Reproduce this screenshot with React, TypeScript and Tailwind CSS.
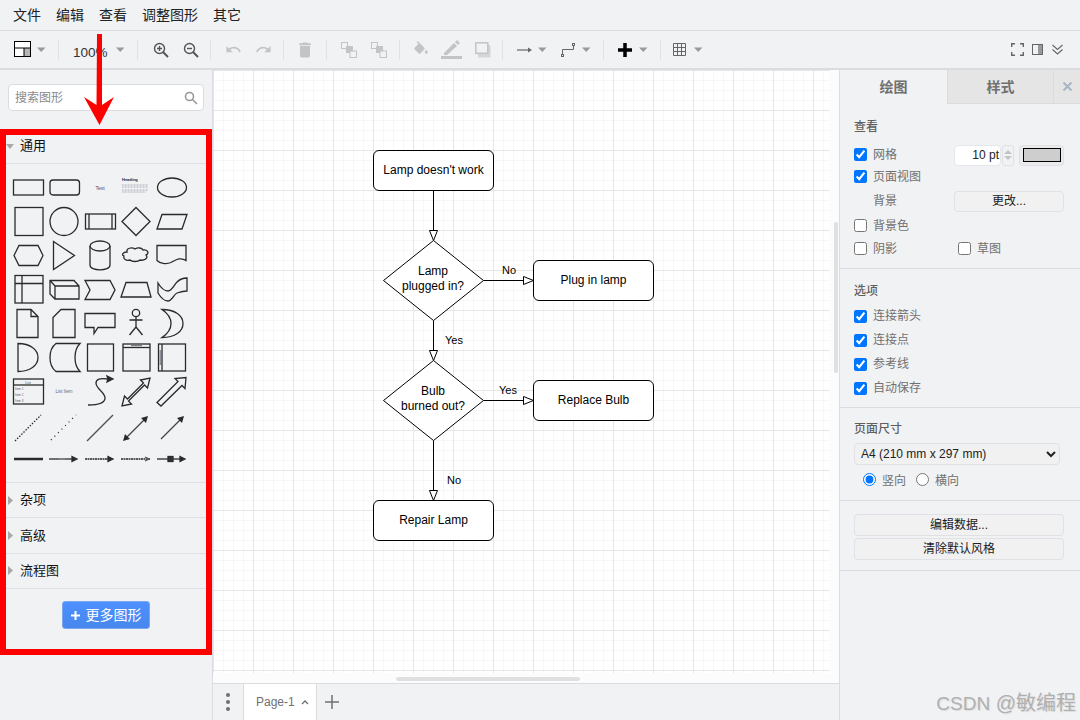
import React from "react";

const C = "#2a2a2a";
function Caret({ className = "" }: { className?: string }) {
  return (
    <svg width="9" height="6" viewBox="0 0 9 6" className={className}>
      <path d="M0 .5h8.5L4.25 5z" fill="#9a9a9a" />
    </svg>
  );
}
function Sep({ ml }: { ml: string }) {
  return <div className={`h-5 w-px bg-[#dfe1e5] ${ml}`} />;
}
function M({ d, w = 16, fill = "#c4c4c4", className = "" }: { d: string; w?: number; fill?: string; className?: string }) {
  return (
    <svg width={w} height={w} viewBox="0 0 24 24" className={className}>
      <path d={d} fill={fill} />
    </svg>
  );
}

function Shape({ children }: { children?: React.ReactNode }) {
  return (
    <svg width="36" height="34" viewBox="0 0 36 34" fill="none" stroke={C} strokeWidth="1.3">
      {children}
    </svg>
  );
}
const T = { fill: "#556", stroke: "none", fontFamily: "Liberation Sans" };

const shapes: React.ReactNode[] = [
  <rect x="3.5" y="10" width="30" height="15" />,
  <rect x="4" y="10" width="29.5" height="15" rx="3" />,
  <text x="18" y="19.5" fontSize="5" textAnchor="middle" {...T} fill="#447">Text</text>,
  <g>
    <text x="4" y="11" fontSize="4" fontWeight="bold" {...T} fill="#223">Heading</text>
    <path d="M4 15h26M4 17h26M4 20h26M4 22h24" stroke="#99a" strokeWidth=".8" strokeDasharray="1 .5" />
  </g>,
  <ellipse cx="18" cy="17.5" rx="14.5" ry="9.5" />,

  <rect x="5" y="3.5" width="28" height="28" />,
  <circle cx="18" cy="17.5" r="14" />,
  <g><rect x="3.5" y="10" width="30" height="15" /><path d="M7 10v15M30 10v15" /></g>,
  <path d="M18 3.5l14 14-14 14-14-14z" />,
  <path d="M8 10.5h25l-5 14.500H3z" />,

  <path d="M4 17.500l5-10h19l5 10-5 10H9z" />,
  <path d="M7.500 3.500l21 14-21 14z" />,
  <g><ellipse cx="18" cy="8" rx="10" ry="5" /><path d="M8 8v19c0 6.500 20 6.500 20 0V8" /></g>,
  <path d="M9 14c-1-4 5-5 8-3 3-2 7-1 8 1 4-1 7 3 3 5 3 3-2 6-6 5-2 2-8 2-10 0-4 1-7-1-6-4-3-1-1-4 3-4z" />,
  <path d="M3 7.500h29v15c-6-4-11 0-15 2-5 2-11 1-14-2z" />,

  <g><rect x="5" y="3.500" width="28" height="27.500" /><path d="M12 3.500V31M5 11.500h28" /></g>,
  <g><path d="M4 8.500h24l5 5.500v13H9l-5-5zM9 14h24M9 14v13M4 8.500l5 5.500" /></g>,
  <path d="M3 8.500h25l5 9.500-5 9.500H3l5-9.500z" />,
  <path d="M8 10.500h21l4 14.500H3z" />,
  <path d="M4 11c3 5 6 8 10 8s6-6 9-9 6-4 10-4v13c-4 0-7 1-10 2s-5 8-9 8-7-3-10-8z" />,

  <g><path d="M7 3.500h14l7 7v21H7zM21 3.500v7h7" /></g>,
  <path d="M15 3.500h14v28H7v-20z" />,
  <path d="M3 7.500h30v14H16l-4 6v-6H3z" />,
  <g><circle cx="18" cy="7" r="3.700" /><path d="M18 11v10M11.500 14h13M18 21l-6.500 8M18 21l6.500 8" /></g>,
  <path d="M8 3.500c13 0 21 6 21 14s-8 14-21 14c6-4 9-9 9-14s-3-10-9-14z" />,

  <path d="M8 3.500c12 0 20 6 20 14s-8 14-20 14z" />,
  <path d="M10 3.500h24c-4 4-5 9-5 14s1 10 5 14H10c-4-3-6-9-6-14s2-11 6-14z" />,
  <rect x="5.500" y="4" width="26" height="27" />,
  <g><rect x="5" y="4" width="27" height="27" /><path d="M5 7.500h27" /><path d="M13 5.700h11" stroke="#666" strokeWidth="1" /></g>,
  <g><rect x="4.500" y="4" width="27" height="27" /><path d="M8 4v27" /><path d="M6.200 10v15" stroke="#667" strokeWidth="1" /></g>,

  <g>
    <rect x="3.500" y="5" width="30" height="25" />
    <path d="M3.500 11h30" />
    <text x="18" y="9.500" fontSize="3.500" textAnchor="middle" {...T}>List</text>
    <text x="5" y="16" fontSize="3" {...T}>Item 1</text>
    <text x="5" y="22" fontSize="3" {...T}>Item 2</text>
    <text x="5" y="28" fontSize="3" {...T}>Item 3</text>
  </g>,
  <text x="18" y="18.500" fontSize="4.500" textAnchor="middle" {...T} fill="#667">List Item</text>,
  <g>
    <path d="M6 31c9 0 17-1 17-7 0-6-9-9-9-15 0-4 4-5 12-4" />
    <path d="M31 5l-6 3 1-3-1-3z" fill={C} />
  </g>,
  <path d="M32 4l-2.500 10-3-3L10.500 27l3 3L4 32l2.500-10 3 3L25.500 9l-3-3z" />,
  <path d="M3 28.500L24 7.500 21 4.500l11-1-1 11-3-3L7 32z" />,

  <path d="M5 33L31 7" strokeDasharray="1.500 1.500" />,
  <path d="M5 32L30 7" strokeDasharray="1 4" />,
  <path d="M5 33L31 7" strokeWidth="1.500" stroke="#555" />,
  <g><path d="M8 30L27 11" stroke="#444" /><path d="M30 8l-7 2 5 5zM5 33l7-2-5-5z" fill={C} stroke="none" /></g>,
  <g><path d="M7 31L27 11" stroke="#444" /><path d="M30 8l-7 2 5 5z" fill={C} stroke="none" /></g>,

  <path d="M4 17h29" strokeWidth="2.500" />,
  <g><path d="M3 17h25" /><path d="M31 17l-5-2.500v5z" fill={C} /><path d="M13 17h6" stroke="#888" strokeWidth="1.500" /></g>,
  <g><path d="M3 17h25" strokeDasharray="2 .5" /><path d="M31 17l-5-2.500v5z" fill={C} /></g>,
  <g><path d="M3 17h29" strokeDasharray="2 .5" /><path d="M27 15l4 2-4 2" stroke="#555" /></g>,
  <g><path d="M3 17h25" /><path d="M31 17l-5-2.500v5z" fill={C} /><rect x="14" y="14.500" width="5" height="5" fill="#333" /></g>,
];

function Sidebar() {
  return (
    <div className="w-[212px] shrink-0 bg-[#f1f2f4] flex flex-col">
      <div className="h-[59px] pt-[14px] px-2">
        <div className="h-[27px] w-[196px] bg-white border border-[#dadce0] rounded-[4px] flex items-center justify-between pl-[6px] pr-[5px]">
          <span className="text-xs text-[#8a8a8a]">搜索图形</span>
          <svg width="14" height="14" viewBox="0 0 14 14" fill="none" stroke="#999" strokeWidth="1.600">
            <circle cx="5.500" cy="5.500" r="4" />
            <path d="M8.500 8.500l4.500 4.500" />
          </svg>
        </div>
      </div>
      <div className="h-[526px] border-[6px] border-[#ff0000] flex flex-col">
        <div className="h-[29px] pb-[6px] border-b border-[#dfe1e5] flex items-center">
          <svg width="8" height="5" viewBox="0 0 8 5"><path d="M0 0h8L4 5z" fill="#a8a8a8" /></svg>
          <span className="ml-[6px] text-[13px] text-[#111]">通用</span>
        </div>
        <div className="h-[319px] border-b border-[#dfe1e5] pt-[6px] pl-1">
          <div className="grid grid-cols-[repeat(5,36px)] auto-rows-[34px]">
            {shapes.map((s, i) => <Shape key={i}>{s}</Shape>)}
          </div>
        </div>
        {["杂项", "高级", "流程图"].map((t) => (
          <div key={t} className="h-[35.400px] border-b border-[#dfe1e5] flex items-center pl-[2px]">
            <svg width="5" height="9" viewBox="0 0 5 9"><path d="M0 0v9l5-4.500z" fill="#a8a8a8" /></svg>
            <span className="ml-[7px] text-[13px] text-[#111]">{t}</span>
          </div>
        ))}
        <div className="flex pt-[12px] pl-[56px]">
          <div className="w-[88px] h-[28px] rounded-[3px] bg-gradient-to-b from-[#4d90fe] to-[#4787ed] border border-[#7aa7f0] flex items-center justify-center gap-[6px] text-white text-sm">
            <svg width="9" height="9" viewBox="0 0 9 9" stroke="#fff" strokeWidth="2"><path d="M4.500 0v9M0 4.500h9" /></svg>
            <span>更多图形</span>
          </div>
        </div>
      </div>
      <div className="flex-1" />
    </div>
  );
}

function Node({ x, y, children }: { x: string; y: string; children: React.ReactNode }) {
  return (
    <div className={`absolute ${x} ${y} h-[41px] w-[121px] pb-[2px] bg-white border border-black rounded-[6px] flex items-center justify-center text-xs text-black`}>
      {children}
    </div>
  );
}
function Label({ pos, size = "text-xs", children }: { pos: string; size?: string; children: React.ReactNode }) {
  return <div className={`absolute ${pos} ${size} text-center leading-[15px] text-black whitespace-nowrap`}>{children}</div>;
}

function Canvas() {
  return (
    <div className="flex-1 relative bg-white flex flex-col min-w-0">
      <div className="flex-1 relative bg-[#fcfcfc]">
        <div className="absolute left-0 top-0 w-[617px] h-[603px] bg-white bg-[linear-gradient(#e6e6e6_1px,transparent_1px),linear-gradient(90deg,#e6e6e6_1px,transparent_1px),linear-gradient(#f7f7f7_1px,transparent_1px),linear-gradient(90deg,#f7f7f7_1px,transparent_1px)] bg-[size:40px_40px,40px_40px,10px_10px,10px_10px]" />
        <svg width="626" height="613" className="absolute left-0 top-0" fill="none" stroke="#000">
          <g transform="translate(-213 -70)">
            <path d="M433.500 190.500V231M483.500 280.500H524M433.500 320.500V351M483.500 400.500H524M433.500 440.500V491" />
            <path d="M429.500 230.500h8l-4 10zM429.500 350.500h8l-4 10zM429.500 490.500h8l-4 10zM523.500 276.500v8l10-4zM523.500 396.500v8l10-4z" fill="#fff" />
            <path d="M433.500 240.500l50 40-50 40-50-40zM433.500 360.500l50 40-50 40-50-40z" fill="#fff" />
          </g>
        </svg>
        <Node x="left-[160px]" y="top-[80px]">Lamp doesn't work</Node>
        <Node x="left-[320px]" y="top-[190px]">Plug in lamp</Node>
        <Node x="left-[320px]" y="top-[310px]">Replace Bulb</Node>
        <Node x="left-[160px]" y="top-[430px]">Repair Lamp</Node>
        <Label pos="left-[170px] w-[100px] top-[193.500px]">Lamp<br />plugged in?</Label>
        <Label pos="left-[170px] w-[100px] top-[313.500px]">Bulb<br />burned out?</Label>
        <Label pos="left-[289px] top-[193px]" size="text-[11px]">No</Label>
        <Label pos="left-[232px] top-[263px]" size="text-[11px]">Yes</Label>
        <Label pos="left-[286px] top-[313px]" size="text-[11px]">Yes</Label>
        <Label pos="left-[234px] top-[403px]" size="text-[11px]">No</Label>
        <div className="absolute left-[621px] top-[152px] w-[4px] h-[151px] rounded bg-[#e0e0e0]" />
        <div className="absolute left-[183px] top-[607px] w-[184px] h-[4px] rounded bg-[#e0e0e0]" />
      </div>
      <div className="h-[37px] shrink-0 bg-[#f1f2f4] border-t border-[#dadce0] flex">
        <div className="w-[30px] flex flex-col items-center justify-center gap-[3px]">
          <i className="block w-[4px] h-[4px] rounded-full bg-[#707070]" />
          <i className="block w-[4px] h-[4px] rounded-full bg-[#707070]" />
          <i className="block w-[4px] h-[4px] rounded-full bg-[#707070]" />
        </div>
        <div className="w-[74px] bg-white border-x border-[#dadce0] flex items-center pl-[12px] gap-[6px] text-xs text-[#707070]">
          <span>Page-1</span>
          <svg width="8" height="6" viewBox="0 0 8 6" fill="none" stroke="#707070" strokeWidth="1.300"><path d="M1 5l3-3 3 3" /></svg>
        </div>
        <div className="ml-[8px] flex items-center">
          <svg width="14" height="14" viewBox="0 0 14 14" stroke="#707070" strokeWidth="1.500"><path d="M7 0v14M0 7h14" /></svg>
        </div>
      </div>
    </div>
  );
}

function Check({ label, checked = false, className = "", box = "" }: { label: string; checked?: boolean; className?: string; box?: string }) {
  return (
    <label className={`flex items-center gap-[6px] text-xs text-[#707070] ${className}`}>
      <input type="checkbox" checked={checked} readOnly className={`w-[13px] h-[13px] ${box}`} />
      <span>{label}</span>
    </label>
  );
}
function Title({ children }: { children: React.ReactNode }) {
  return <div className="text-xs font-medium text-[#5f5f5f] leading-4">{children}</div>;
}
function Btn({ children, className = "" }: { children: React.ReactNode; className?: string }) {
  return (
    <div className={`bg-[#f1f1f1] border border-[#dfe1e5] rounded-[4px] flex items-center justify-center text-xs text-[#222] ${className}`}>
      {children}
    </div>
  );
}

function Panel() {
  const up = "-translate-y-px";
  return (
    <div className="w-[241px] shrink-0 bg-[#f1f2f4] border-l border-[#dadce0] flex flex-col">
      <div className="h-[34px] flex text-sm font-bold text-[#707070]">
        <div className="w-[107px] flex items-center justify-center">绘图</div>
        <div className="w-[107px] bg-[#e5e5e5] border-x border-b border-[#dadce0] flex items-center justify-center">样式</div>
        <div className="flex-1 bg-[#e5e5e5] border-b border-[#dadce0] flex items-center justify-center">
          <svg width="9" height="9" viewBox="0 0 9 9" stroke="#a9b4c4" strokeWidth="2"><path d="M.5.500l8 8M8.500.500l-8 8" /></svg>
        </div>
      </div>
      <div className="h-[165px] border-b border-[#dadce0] pl-[14px] pr-[16px] pt-[15px]">
        <Title>查看</Title>
        <div className="mt-[10px] h-5 flex items-center justify-between">
          <Check label="网格" checked box={up} />
          <div className="flex items-center">
            <div className="w-[47px] h-[21px] bg-white border border-[#e6e7ea] rounded-[4px] flex items-center justify-end pr-[1px] text-xs text-[#222]">10 pt</div>
            <div className="ml-[1px] w-[12px] h-[21px] border border-[#dfe1e5] rounded-[3px] flex flex-col items-center justify-center gap-[2px]">
              <svg width="8" height="5" viewBox="0 0 8 5"><path d="M0 5l4-4 4 4z" fill="#c4c4c4" /></svg>
              <svg width="8" height="5" viewBox="0 0 8 5"><path d="M0 0l4 4 4-4z" fill="#c4c4c4" /></svg>
            </div>
            <div className="ml-[5px] w-[45px] h-[21px] bg-[#ebebeb] border border-[#dfe1e5] rounded-[4px] flex items-center justify-center">
              <div className="w-[38px] h-[14px] bg-[#cecece] border border-black" />
            </div>
          </div>
        </div>
        <Check label="页面视图" checked box={up} className="mt-[2px] h-5" />
        <div className="mt-[3px] h-[22px] flex items-center">
          <span className="ml-[19px] text-xs text-[#707070]">背景</span>
          <Btn className="ml-[57px] w-[110px] h-[21px]">更改...</Btn>
        </div>
        <Check label="背景色" box={up} className="mt-[4px] h-5" />
        <div className="mt-[3px] h-5 flex">
          <Check label="阴影" box={up} className="w-[104px]" />
          <Check label="草图" box={up} />
        </div>
      </div>
      <div className="h-[139px] border-b border-[#dadce0] pl-[14px] pt-[14px]">
        <Title>选项</Title>
        <div className="mt-[7px] flex flex-col gap-1">
          <Check label="连接箭头" checked className="h-5" />
          <Check label="连接点" checked className="h-5" />
          <Check label="参考线" checked className="h-5" />
          <Check label="自动保存" checked className="h-5" />
        </div>
      </div>
      <div className="h-[93px] border-b border-[#dadce0] pl-[14px] pt-[13px]">
        <Title>页面尺寸</Title>
        <select className="mt-[6px] block w-[206px] h-[22px] bg-[#f1f1f1] border border-[#dfe1e5] rounded-[4px] text-xs text-[#222] pl-[2px]">
          <option>A4 (210 mm x 297 mm)</option>
        </select>
        <div className="mt-[4px] h-5 pl-[9px] flex items-center text-xs text-[#707070]">
          <input type="radio" checked readOnly className="w-[13px] h-[13px]" />
          <span className="ml-[6px] pt-[3px]">竖向</span>
          <input type="radio" readOnly checked={false} className="ml-[10px] w-[13px] h-[13px]" />
          <span className="ml-[6px] pt-[3px]">横向</span>
        </div>
      </div>
      <div className="h-[70px] border-b border-[#dadce0] pl-[14px] pt-[13px] flex flex-col gap-[2px]">
        <Btn className="w-[210px] h-[22px]">编辑数据...</Btn>
        <Btn className="w-[210px] h-[22px]">清除默认风格</Btn>
      </div>
    </div>
  );
}

const zi = (plus: boolean) => (
  <svg width="16" height="16" viewBox="0 0 16 16" fill="none" stroke="#555" strokeWidth="1.400">
    <circle cx="6.500" cy="6.500" r="5" />
    <path d="M10 10l5 5" strokeWidth="2" />
    <path d={plus ? "M4 6.500h5M6.500 4v5" : "M4 6.500h5"} />
  </svg>
);
const order = (
  <svg width="16" height="16" viewBox="0 0 16 16">
    <rect x=".500" y=".500" width="6" height="6" fill="none" stroke="#c4c4c4" />
    <rect x="5" y="4" width="7" height="7" fill="#c4c4c4" />
    <rect x="9" y="9" width="6.500" height="6.500" fill="#f1f2f4" stroke="#c4c4c4" />
  </svg>
);

function Toolbar() {
  return (
    <div className="h-[39px] shrink-0 bg-[#f1f2f4] border-b-2 border-[#dadce0] flex items-center pl-[14px]">
      <svg width="18" height="17" viewBox="0 0 18 17">
        <rect x=".500" y=".500" width="16" height="15" fill="#fff" stroke="#000" />
        <rect x="10" y="7" width="6" height="8" fill="#b5b5b5" />
        <path d="M0 7h17M10 7v9" stroke="#000" />
      </svg>
      <Caret className="ml-[5px]" />
      <Sep ml="ml-[12px]" />
      <span className="ml-[14px] pt-[7px] text-[13.500px] text-[#333] w-[34px]">100%</span>
      <Caret className="ml-[9px]" />
      <Sep ml="ml-[12px]" />
      <div className="ml-[15px]">{zi(true)}</div>
      <div className="ml-[14px]">{zi(false)}</div>
      <Sep ml="ml-[11px]" />
      <M className="ml-[14px]" w={17} d="M12.500 8c-2.650 0-5.050.990-6.900 2.600L2 7v9h9l-3.620-3.620c1.390-1.160 3.160-1.880 5.120-1.880 3.540 0 6.550 2.310 7.600 5.500l2.370-.780C21.080 11.030 17.150 8 12.500 8z" />
      <M className="ml-[13px]" w={17} d="M18.400 10.600C16.550 8.990 14.150 8 11.500 8c-4.650 0-8.580 3.030-9.960 7.220L3.900 16c1.050-3.190 4.050-5.500 7.600-5.500 1.950 0 3.730.720 5.120 1.880L13 16h9V7l-3.600 3.600z" />
      <Sep ml="ml-[11px]" />
      <M className="ml-[11px]" w={20} d="M6 19c0 1.100.900 2 2 2h8c1.100 0 2-.900 2-2V7H6v12zM19 4h-3.500l-1-1h-5l-1 1H5v2h14V4z" />
      <Sep ml="ml-[11px]" />
      <div className="ml-[14px]">{order}</div>
      <div className="ml-[14px]">{order}</div>
      <Sep ml="ml-[12px]" />
      <svg width="18" height="18" viewBox="0 0 24 24" className="ml-[12px]">
        <path fill="#c4c4c4" d="M16.560 8.940L7.620 0 6.210 1.410l2.380 2.380-5.150 5.150c-.590.590-.590 1.540 0 2.120l5.500 5.500c.290.290.680.440 1.060.440s.770-.150 1.060-.440l5.500-5.500c.590-.580.590-1.530 0-2.120zM19 11.500s-2 2.170-2 3.500c0 1.100.900 2 2 2s2-.900 2-2c0-1.330-2-3.500-2-3.500z" />
      </svg>
      <svg width="22" height="20" viewBox="0 0 22 20" className="ml-[11px]">
        <path fill="#c4c4c4" d="M3 13L13 3l3 3L6 15H3zM14 2l2-2 3 3-2 2z" />
        <rect y="16" width="21" height="3" fill="#c4c4c4" />
      </svg>
      <svg width="16" height="16" viewBox="0 0 16 16" className="ml-[12px]">
        <rect x="3" y="3" width="12.500" height="12.500" fill="#d6d6d6" />
        <rect x=".800" y=".800" width="12" height="10.500" fill="#f1f2f4" stroke="#c4c4c4" strokeWidth="1.500" />
      </svg>
      <Sep ml="ml-[11px]" />
      <svg width="16" height="8" viewBox="0 0 16 8" className="ml-[14px]" fill="none">
        <path d="M0 4h12" stroke="#666" strokeWidth="1.200" /><path d="M15 4l-4-2.500v5z" fill="#666" />
      </svg>
      <Caret className="ml-[5px]" />
      <svg width="16" height="16" viewBox="0 0 16 16" className="ml-[13px]" fill="none" stroke="#666">
        <rect x="1.500" y="12.500" width="2" height="2" />
        <rect x="12.500" y="1.500" width="2" height="2" />
        <path d="M2.500 12V7.500h11V4" />
      </svg>
      <Caret className="ml-[6px]" />
      <Sep ml="ml-[12px]" />
      <svg width="14" height="14" viewBox="0 0 14 14" className="ml-[14px]">
        <path d="M5.250 0h3.500v5.250H14v3.500H8.750V14h-3.500V8.750H0v-3.500h5.250z" fill="#000" />
      </svg>
      <Caret className="ml-[7px]" />
      <Sep ml="ml-[12px]" />
      <svg width="14" height="14" viewBox="0 0 14 14" className="ml-[12px]" fill="none" stroke="#666">
        <path d="M.500.500h12v12H.500zM.500 4.500h12M.500 8.500h12M4.500.500v12M8.500.500v12" />
      </svg>
      <Caret className="ml-[7px]" />
      <div className="flex-1" />
      <svg width="13" height="13" viewBox="0 0 13 13" fill="none" stroke="#666" strokeWidth="1.400">
        <path d="M.700 4V.700H4M9 .700h3.300V4M12.300 9v3.300H9M4 12.300H.700V9" />
      </svg>
      <svg width="11" height="11" viewBox="0 0 11 11" className="ml-[8px]">
        <rect x="6" y="1" width="4" height="9" fill="#999" />
        <rect x=".500" y=".500" width="10" height="10" fill="none" stroke="#666" />
      </svg>
      <svg width="11" height="11" viewBox="0 0 11 11" className="ml-[9px] mr-[17px]" fill="none" stroke="#666" strokeWidth="1.100">
        <path d="M.500 1l5 4.500 5-4.500M.500 5.500l5 4.500 5-4.500" />
      </svg>
    </div>
  );
}

export default function App() {
  return (
    <div className="relative w-[1080px] h-[720px] overflow-hidden flex flex-col bg-[#f1f2f4] font-['Liberation_Sans','Noto_Sans_CJK_SC',sans-serif]">
      <div className="h-[31px] shrink-0 border-b border-[#dadce0] flex items-center gap-[15px] pl-[13px] text-sm text-[#222]">
        {["文件", "编辑", "查看", "调整图形", "其它"].map((t) => <span key={t}>{t}</span>)}
      </div>
      <Toolbar />
      <div className="flex flex-1 min-h-0">
        <Sidebar />
        <div className="w-px shrink-0 bg-[#dadce0]" />
        <Canvas />
        <Panel />
      </div>
      <svg width="40" height="100" viewBox="0 0 40 100" className="absolute left-[80px] top-[30px]">
        <path d="M17 4h5v71l12-8-14.500 28-15.500-28 12.500 8z" fill="#ff0000" />
      </svg>
      <div className="absolute right-[4px] bottom-[4px] text-[20px] leading-6 text-[#b0b0b0] [text-shadow:1px_1px_1px_#dcdcdc]"><span className="text-[19px]">CSDN</span> @敏编程</div>
    </div>
  );
}
